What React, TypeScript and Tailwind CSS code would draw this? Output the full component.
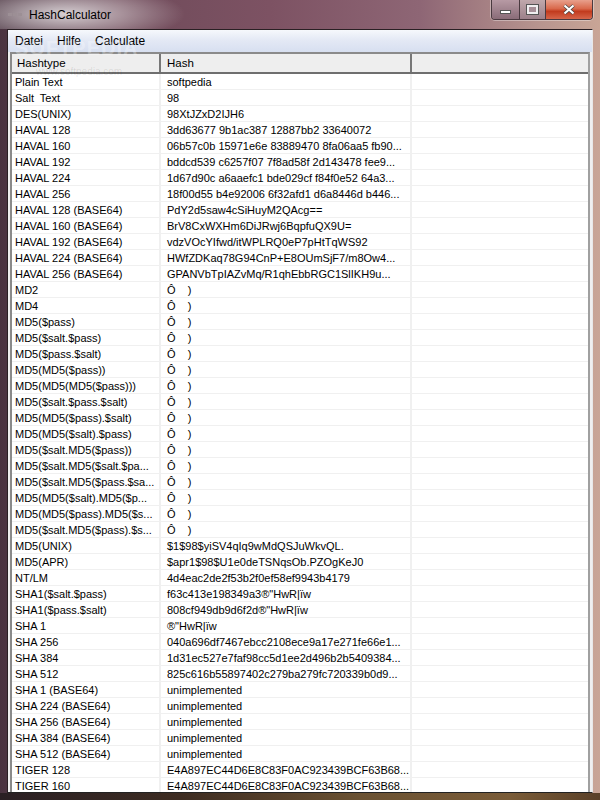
const rows: [string, string][] = [
  ["Plain Text", "softpedia"],
  ["Salt  Text", "98"],
  ["DES(UNIX)", "98XtJZxD2IJH6"],
  ["HAVAL 128", "3dd63677 9b1ac387 12887bb2 33640072"],
  ["HAVAL 160", "06b57c0b 15971e6e 83889470 8fa06aa5 fb90..."],
  ["HAVAL 192", "bddcd539 c6257f07 7f8ad58f 2d143478 fee9..."],
  ["HAVAL 224", "1d67d90c a6aaefc1 bde029cf f84f0e52 64a3..."],
  ["HAVAL 256", "18f00d55 b4e92006 6f32afd1 d6a8446d b446..."],
  ["HAVAL 128 (BASE64)", "PdY2d5saw4cSiHuyM2QAcg=="],
  ["HAVAL 160 (BASE64)", "BrV8CxWXHm6DiJRwj6BqpfuQX9U="],
  ["HAVAL 192 (BASE64)", "vdzVOcYIfwd/itWPLRQ0eP7pHtTqWS92"],
  ["HAVAL 224 (BASE64)", "HWfZDKaq78G94CnP+E8OUmSjF7/m8Ow4..."],
  ["HAVAL 256 (BASE64)", "GPANVbTpIAZvMq/R1qhEbbRGC1SlIKH9u..."],
  ["MD2", "Ô    )"],
  ["MD4", "Ô    )"],
  ["MD5($pass)", "Ô    )"],
  ["MD5($salt.$pass)", "Ô    )"],
  ["MD5($pass.$salt)", "Ô    )"],
  ["MD5(MD5($pass))", "Ô    )"],
  ["MD5(MD5(MD5($pass)))", "Ô    )"],
  ["MD5($salt.$pass.$salt)", "Ô    )"],
  ["MD5(MD5($pass).$salt)", "Ô    )"],
  ["MD5(MD5($salt).$pass)", "Ô    )"],
  ["MD5($salt.MD5($pass))", "Ô    )"],
  ["MD5($salt.MD5($salt.$pa...", "Ô    )"],
  ["MD5($salt.MD5($pass.$sa...", "Ô    )"],
  ["MD5(MD5($salt).MD5($p...", "Ô    )"],
  ["MD5(MD5($pass).MD5($s...", "Ô    )"],
  ["MD5($salt.MD5($pass).$s...", "Ô    )"],
  ["MD5(UNIX)", "$1$98$yiSV4qIq9wMdQSJuWkvQL."],
  ["MD5(APR)", "$apr1$98$U1e0deTSNqsOb.PZOgKeJ0"],
  ["NT/LM", "4d4eac2de2f53b2f0ef58ef9943b4179"],
  ["SHA1($salt.$pass)", "f63c413e198349a3®\"HwR|ïw"],
  ["SHA1($pass.$salt)", "808cf949db9d6f2d®\"HwR|ïw"],
  ["SHA 1", "®\"HwR|ïw"],
  ["SHA 256", "040a696df7467ebcc2108ece9a17e271fe66e1..."],
  ["SHA 384", "1d31ec527e7faf98cc5d1ee2d496b2b5409384..."],
  ["SHA 512", "825c616b55897402c279ba279fc720339b0d9..."],
  ["SHA 1 (BASE64)", "unimplemented"],
  ["SHA 224 (BASE64)", "unimplemented"],
  ["SHA 256 (BASE64)", "unimplemented"],
  ["SHA 384 (BASE64)", "unimplemented"],
  ["SHA 512 (BASE64)", "unimplemented"],
  ["TIGER 128", "E4A897EC44D6E8C83F0AC923439BCF63B68..."],
  ["TIGER 160", "E4A897EC44D6E8C83F0AC923439BCF63B68..."],
];

export default function App() {
  return (
    <div className="relative w-[600px] h-[800px] overflow-hidden flex flex-col font-['Liberation_Sans',Arial,sans-serif] text-[11px] text-black bg-[linear-gradient(90deg,#4a3340_0%,#6f4b5a_20%,#7d5263_45%,#8e6675_70%,#b8958f_90%,#c9a596_100%)]">
      {/* title bar */}
      <div className="h-[29px] shrink-0 flex items-start pl-2 bg-[radial-gradient(ellipse_120px_30px_at_65px_14px,rgba(255,255,255,0.75),rgba(255,255,255,0)_100%)]">
        <div className="mt-[13px] flex gap-px">
          <span className="w-[4px] h-[3px] bg-[#9c8f95]" />
          <span className="w-[4px] h-[3px] bg-[#9c8f95]" />
          <span className="w-[4px] h-[3px] bg-[#9c8f95]" />
        </div>
        <span className="ml-[7px] mt-[6px] text-[12px] leading-[18px] text-black">HashCalculator</span>
        <div className="ml-auto mr-[7px] flex h-[20px] border border-t-0 border-[#4a3a40] rounded-b-[4px] overflow-hidden shadow-[0_0_0_1px_rgba(255,255,255,0.35)]">
          <div className="w-[28px] flex items-end justify-center pb-[5px] border-r border-[#4a3a40] bg-[linear-gradient(180deg,#b79aa4,#8a6c78)]">
            <div className="w-[11px] h-[4px] bg-white border border-[#555]" />
          </div>
          <div className="w-[26px] flex items-center justify-center border-r border-[#4a3a40] bg-[linear-gradient(180deg,#c0a8ac,#9c808a)]">
            <div className="w-[11px] h-[9px] bg-[#a78f98] border-2 border-[#f0eef0] outline outline-[#555]" />
          </div>
          <div className="w-[46px] flex items-center justify-center bg-[linear-gradient(180deg,#e8a08c_0%,#d9694c_45%,#c23b1e_60%,#d6654a_100%)]">
            <svg width="12" height="11" viewBox="0 0 12 11">
              <path d="M1.5 1.5l9 8M10.5 1.5l-9 8" stroke="#444" strokeWidth="3.6" />
              <path d="M1.5 1.5l9 8M10.5 1.5l-9 8" stroke="#fff" strokeWidth="2.2" />
            </svg>
          </div>
        </div>
      </div>

      {/* client area */}
      <div className="flex-1 min-h-0 mx-[7px] flex flex-col bg-[#f0f0f0] border border-[#2a2024] border-r-[#e8e8e8] border-b-[#222]">
        <div className="h-[22px] shrink-0 flex items-center gap-[14px] pl-[7px] bg-[linear-gradient(180deg,#f6f8fc_0%,#e4e9f5_45%,#d7dff0_100%)] text-black text-[12px]">
          <span>Datei</span>
          <span>Hilfe</span>
          <span>Calculate</span>
        </div>
        <div className="flex-1 min-h-0 ml-[2px] mr-[2px] flex flex-col overflow-hidden bg-white border-t-2 border-l-2 border-r-2 border-[#8a8a8a] border-r-[#a0a0a0]">
          <div className="h-[20px] shrink-0 flex bg-[#eeeeee] border-b-2 border-[#6e6e6e] text-[11.5px]">
            <div className="w-[149px] shrink-0 pl-[5px] leading-[18px] border-r-2 border-[#777]">Hashtype</div>
            <div className="w-[251px] shrink-0 pl-[6px] leading-[18px] border-r-2 border-[#777]">Hash</div>
            <div className="flex-1" />
          </div>
          <div className="flex-1 min-h-0 overflow-hidden">
            {rows.map(([type, hash]) => (
              <div key={type} className="h-[16px] flex border-b border-[#f0f0f0] leading-[17px] whitespace-pre">
                <div className="w-[149px] shrink-0 pl-[3px] border-r-2 border-[#f0f0f0]">{type}</div>
                <div className="w-[251px] shrink-0 pl-[6px] border-r-2 border-[#f0f0f0]">{hash}</div>
                <div className="flex-1" />
              </div>
            ))}
          </div>
        </div>
      </div>

      {/* bottom frame */}
      <div className="h-[7px] shrink-0 bg-[linear-gradient(90deg,#2a2024_0%,#3d2c22_30%,#6b5233_60%,#7a5c38_85%,#5a4028_100%)]" />

      {/* softpedia watermark */}
      <div className="absolute left-[15px] top-[37px] text-[20px] leading-[22px] tracking-[1px] font-bold text-white/30 pointer-events-none">SOFTPEDIA</div>
      <div className="absolute left-[36px] top-[66px] text-[10px] leading-[12px] text-black/10 pointer-events-none">www.softpedia.com</div>
    </div>
  );
}
